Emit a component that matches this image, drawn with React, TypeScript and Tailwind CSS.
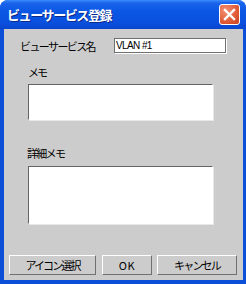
export default function App() {
  return (
    <div className="w-[246px] h-[284px] bg-white font-['Noto_Sans_CJK_JP','Noto_Sans',sans-serif]">
      <div className="w-[246px] h-[284px] flex flex-col rounded-t-[8px] bg-[#0b4fd9] overflow-hidden">
        {/* Title bar */}
        <div className="h-[29px] shrink-0 flex items-center justify-between pl-[7px] pr-[6px] bg-[linear-gradient(to_bottom,#3a8cfb_0px,#1a64ec_3px,#0a56e4_12px,#0b50de_22px,#0846cf_29px)]">
          <span className="text-white font-bold text-[13px] leading-none tracking-[-1.4px] text-shadow-[1px_1px_0_#0c2a8a]">
            ビューサービス登録
          </span>
          <div className="w-[21px] h-[21px] rounded-[3px] border border-white bg-[radial-gradient(circle_at_30%_30%,#f39273,#e05a36_60%,#c8401f)] flex items-center justify-center">
            <svg width="13" height="13" viewBox="0 0 13 13">
              <path d="M2 2 L11 11 M11 2 L2 11" stroke="white" strokeWidth="2.4" strokeLinecap="square" />
            </svg>
          </div>
        </div>

        {/* Client area */}
        <div className="flex-1 ml-[4px] mr-[3px] mb-[4px] bg-[#cccccc] pt-[9px] text-black text-[11px]">
          <div className="flex items-center h-[15px]">
            <span className="w-[110px] pl-[16px] leading-[12px] tracking-[-1.6px]">ビューサービス名</span>
            <div className="w-[112px] h-[15px] bg-white border border-[#707070] shadow-[1px_1px_0_#ffffff] flex items-center pl-[1px]">
              <span className="font-['Liberation_Sans',sans-serif] text-[10px] tracking-[-0.6px] leading-none">VLAN #1</span>
            </div>
          </div>

          <div className="mt-[13px] ml-[24px] h-[12px] leading-[12px] tracking-[-2px]">メモ</div>
          <div className="mt-[6px] ml-[24px] w-[185px] h-[36px] bg-white border-t border-l border-[#646464] border-b-white border-r-white border-b border-r shadow-[1px_1px_0_#e8e8e8]" />

          <div className="mt-[27px] ml-[23px] h-[12px] leading-[12px] tracking-[-1.7px]">詳細メモ</div>
          <div className="mt-[7px] ml-[24px] w-[185px] h-[58px] bg-white border-t border-l border-[#646464] border-b-white border-r-white border-b border-r shadow-[1px_1px_0_#e8e8e8]" />

          <div className="mt-[31px] ml-[5px] flex h-[20px]">
            <button className="w-[87px] h-[20px] bg-[#cccccc] border border-t-white border-l-white border-b-[#707070] border-r-[#707070] text-[11px] tracking-[-1.9px] leading-none">
              アイコン選択
            </button>
            <button className="ml-[6px] w-[50px] h-[20px] bg-[#cccccc] border border-t-white border-l-white border-b-[#707070] border-r-[#707070] text-[11px] tracking-[0.5px] leading-none">
              OK
            </button>
            <button className="ml-[5px] w-[80px] h-[20px] bg-[#cccccc] border border-t-white border-l-white border-b-[#707070] border-r-[#707070] text-[11px] tracking-[-1.8px] leading-none">
              キャンセル
            </button>
          </div>
        </div>
      </div>
    </div>
  )
}
